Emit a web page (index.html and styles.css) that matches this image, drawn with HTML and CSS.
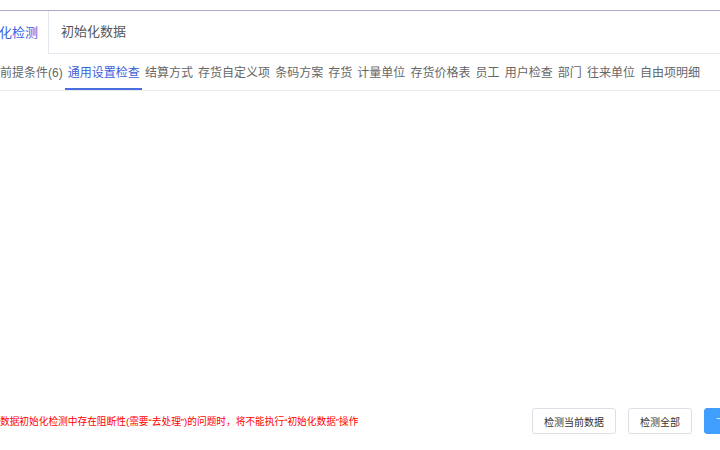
FILE: index.html
```html
<!DOCTYPE html>
<html lang="zh-CN">
<head>
<meta charset="utf-8">
<title>初始化检测</title>
<link rel="stylesheet" href="styles.css">
</head>
<body>
<div class="page">
  <div class="tabs">
    <div class="tab active">初始化检测</div>
    <div class="tab">初始化数据</div>
    <div class="tabs-fill"></div>
  </div>
  <div class="subnav">
    <div class="subtab">前提条件(6)</div>
    <div class="subtab active">通用设置检查</div>
    <div class="subtab">结算方式</div>
    <div class="subtab">存货自定义项</div>
    <div class="subtab">条码方案</div>
    <div class="subtab">存货</div>
    <div class="subtab">计量单位</div>
    <div class="subtab">存货价格表</div>
    <div class="subtab">员工</div>
    <div class="subtab">用户检查</div>
    <div class="subtab">部门</div>
    <div class="subtab">往来单位</div>
    <div class="subtab">自由项明细</div>
  </div>
  <div class="content"></div>
  <div class="footer">
    <p class="tip">数据初始化检测中存在阻断性(需要“去处理”)的问题时，将不能执行“初始化数据”操作</p>
    <div class="actions">
      <button class="btn">检测当前数据</button>
      <button class="btn">检测全部</button>
      <button class="btn primary">下一步</button>
    </div>
  </div>
</div>
</body>
</html>
```
FILE: styles.css
```css
html, body {
  margin: 0;
  padding: 0;
  overflow: hidden;
  background: #fff;
}
body {
  width: 720px;
  height: 450px;
  font-family: "Liberation Sans", "Noto Sans CJK SC", sans-serif;
}
.page {
  margin-left: -40px;
  width: 814px;
  height: 450px;
  padding-top: 10px;
  box-sizing: border-box;
  display: flex;
  flex-direction: column;
}
.tabs {
  display: flex;
  border-top: 1px solid #a9abc8;
}
.tab {
  height: 43px;
  box-sizing: border-box;
  line-height: 42px;
  font-size: 13px;
  color: #555;
  padding: 0 12px;
  border-bottom: 1px solid #e4e7ed;
  white-space: nowrap;
}
.tab.active {
  color: #3463e0;
  padding: 0 10px 0 13px;
  border-bottom: none;
  border-right: 1px solid #e4e7ed;
  line-height: 43px;
}
.tabs-fill {
  flex: 1;
  height: 43px;
  box-sizing: border-box;
  border-bottom: 1px solid #e4e7ed;
}
.subnav {
  display: flex;
  height: 37px;
  box-sizing: border-box;
  padding-left: 37.5px;
  border-bottom: 1px solid #e8eaee;
}
.subtab {
  height: 36px;
  box-sizing: border-box;
  padding: 4px 2.55px 0;
  line-height: 30px;
  font-size: 12px;
  color: #666;
  white-space: nowrap;
  border-bottom: 2px solid transparent;
}
.subtab.active {
  color: #3b5fdb;
  border-bottom-color: #4a6ee0;
}
.content {
  flex: 1;
}
.footer {
  display: flex;
  align-items: center;
  justify-content: space-between;
  padding: 0 16px 16px 40px;
}
.tip {
  margin: 0;
  font-size: 9.7px;
  color: #f00;
  white-space: nowrap;
}
.actions {
  display: flex;
  gap: 12px;
}
.btn {
  height: 26px;
  padding: 0 11px;
  font-family: "Liberation Sans", "Noto Sans CJK SC", sans-serif;
  font-size: 10px;
  color: #333;
  background: #fff;
  border: 1px solid #dcdfe6;
  border-radius: 3px;
  white-space: nowrap;
}
.btn.primary {
  background: #409eff;
  border-color: #409eff;
  color: #fff;
}
```
